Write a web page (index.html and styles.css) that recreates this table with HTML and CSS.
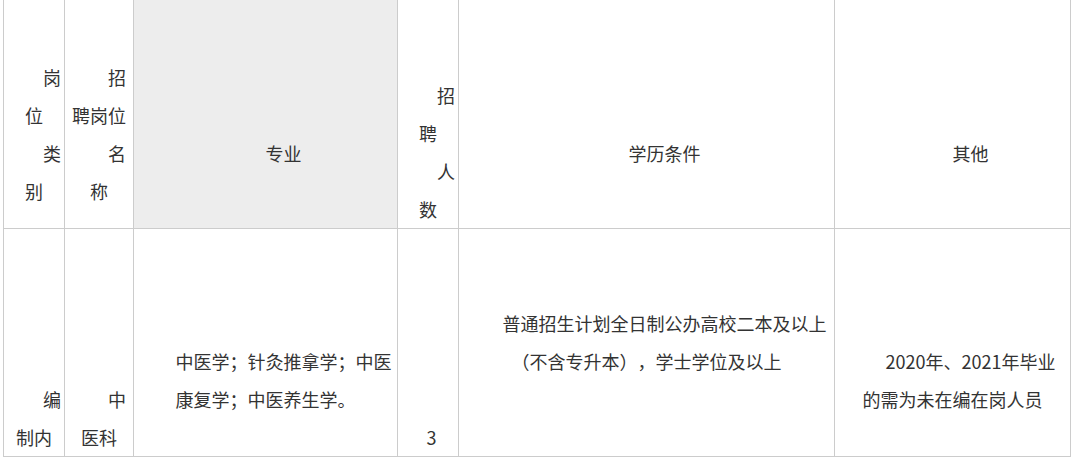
FILE: index.html
```html
<!DOCTYPE html>
<html lang="zh-CN">
<head>
<meta charset="utf-8">
<title>招聘岗位</title>
<link rel="stylesheet" href="styles.css">
</head>
<body>
<table class="jobs">
  <colgroup>
    <col class="c-type">
    <col class="c-name">
    <col class="c-major">
    <col class="c-num">
    <col class="c-edu">
    <col class="c-other">
  </colgroup>
  <tr class="head">
    <td class="up-half"><p>岗<br>位</p><p>类<br>别</p></td>
    <td class="up-half"><p>招<br>聘岗位</p><p>名<br>称</p></td>
    <td class="up-mid shade"><p>专业</p></td>
    <td><p>招<br>聘</p><p>人<br>数</p></td>
    <td class="up-mid"><p>学历条件</p></td>
    <td class="up-mid"><p>其他</p></td>
  </tr>
  <tr class="body">
    <td><p>编<br>制内</p></td>
    <td><p>中<br>医科</p></td>
    <td class="up-1"><p>中医学；针灸推拿学；中医<br>康复学；中医养生学。</p></td>
    <td><p class="num">3</p></td>
    <td class="up-2"><p>普通招生计划全日制公办高校二本及以上<br>（不含专升本），学士学位及以上</p></td>
    <td class="up-1"><p>2020年、2021年毕业<br>的需为未在编在岗人员</p></td>
  </tr>
</table>
</body>
</html>
```

FILE: styles.css
```css
body {
  margin: 0;
  background: #ffffff;
  font-family: "Noto Sans CJK SC", "Noto Sans", sans-serif;
  color: #333333;
}

.jobs {
  border-collapse: collapse;
  table-layout: fixed;
  width: 1067px;
  margin: -1px 0 0 3px;
  font-size: 18px;
  line-height: 38px;
  text-spacing-trim: space-all;
}

.c-type { width: 61px; }
.c-name { width: 69px; }
.c-major { width: 264px; }
.c-num { width: 61px; }
.c-edu { width: 376px; }
.c-other { width: 236px; }

.jobs td {
  border: 1px solid #cccccc;
  padding: 0 3px;
  vertical-align: bottom;
  text-align: center;
  white-space: nowrap;
}

.jobs p {
  margin: 0;
  text-indent: 2em;
}

.jobs p.num {
  text-indent: 7px;
}

.head { height: 229px; }
.body { height: 228px; }

.shade { background: #ededed; }

.jobs td.up-half { padding-bottom: 18px; }
.jobs td.up-mid { padding-bottom: 56px; }
.jobs td.up-1 { padding-bottom: 38px; }
.jobs td.up-2 { padding-bottom: 76px; }
```
